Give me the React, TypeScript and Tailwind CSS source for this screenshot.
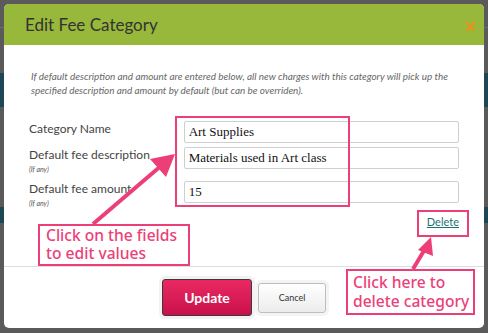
import React from 'react';

const PINK = '#ec3f78';

// Pink annotation text, same family as the tutorial callouts
const calloutFont = { fontFamily: '"Noto Sans", "Open Sans", sans-serif' };

const Field = ({ label, hint, value }: { label: string; hint?: boolean; value: string }) => (
  <div className={`flex ${hint ? 'h-[34px]' : 'h-[26px]'}`}>
    <div className="w-[155px] pt-[1px]">
      <div className="text-[12px] leading-[14px] text-[#444]">{label}</div>
      {hint && <div className="mt-[3px] text-[7px] italic leading-[9px] text-[#555]">(If any)</div>}
    </div>
    <input
      readOnly
      value={value}
      className="h-[22px] w-[276px] rounded-[2px] border border-[#cfcfcf] bg-white px-[4px] text-[13px] text-[#111] outline-none"
      style={{ fontFamily: '"Liberation Serif", serif' }}
    />
  </div>
);

export default function App() {
  return (
    <div className="relative h-[333px] w-[488px] overflow-hidden bg-[#5a5a5a]" style={{ fontFamily: 'Lato, "Open Sans", sans-serif' }}>
      {/* page behind the overlay */}
      <div className="flex h-full flex-col">
        <div className="h-[28px] border-b border-[#6a6a6a]" />
        <div className="h-[45px]" />
        <div className="h-[34px] bg-[#1d4755]" />
        <div className="h-[100px]" />
        <div className="h-[16px] bg-[#1d4755]" />
        <div className="flex-1" />
      </div>

      {/* modal */}
      <div className="absolute left-[4px] top-[4px] flex h-[324px] w-[480px] flex-col overflow-hidden rounded-[5px] bg-white">
        <div className="flex h-[41px] shrink-0 items-center justify-between bg-[#97b83a] pl-[21px] pr-[9px]">
          <h2 className="text-[17px] leading-none text-[#333]">Edit Fee Category</h2>
          <svg width="9" height="9" viewBox="0 0 9 9" className="mt-[4px]">
            <path d="M1 1 L8 8 M8 1 L1 8" stroke="#e8921c" strokeWidth="2.4" strokeLinecap="round" />
          </svg>
        </div>

        <div className="relative flex-1 px-[25px] pt-[24px]">
          <p className="pl-[2px] text-[9.9px] italic leading-[14px] text-[#666]">
            If default description and amount are entered below, all new charges with this category will pick up the
            specified description and amount by default (but can be overriden).
          </p>

          <div className="mt-[24px] flex flex-col">
            <Field label="Category Name" value="Art Supplies" />
            <Field label="Default fee description" hint value="Materials used in Art class" />
            <Field label="Default fee amount" hint value="15" />
          </div>

          <div className="mt-0 flex justify-end">
            <a href="#" className="text-[11px] leading-[14px] text-[#1f6f73] underline">Delete</a>
          </div>
        </div>

        <div className="flex h-[62px] shrink-0 items-center justify-center gap-[6px] border-t border-[#dedede]">
          <button className="h-[37px] w-[90px] rounded-[3px] border border-[#3a3a3a] bg-gradient-to-b from-[#ea2862] to-[#c9104b] text-[14px] font-bold text-white shadow-[0_0_0_3px_#f2f2f2]">
            Update
          </button>
          <button className="h-[30px] w-[68px] rounded-[3px] border border-[#bdbdbd] bg-gradient-to-b from-white to-[#ececec] text-[9px] text-[#333] shadow-[0_0_0_3px_#f4f4f4]">
            Cancel
          </button>
        </div>
      </div>

      {/* tutorial annotations */}
      <div className="absolute left-[175px] top-[116px] h-[91px] w-[175px] border-2" style={{ borderColor: PINK }} />
      <div className="absolute left-[417px] top-[210px] h-[27px] w-[52px] border-2" style={{ borderColor: PINK }} />

      <svg className="absolute left-0 top-0" width="488" height="333">
        <line x1="93" y1="224" x2="162" y2="165" stroke={PINK} strokeWidth="4" />
        <polygon points="175,154 150,159 166,177" fill={PINK} />
        <line x1="413" y1="269" x2="425" y2="249" stroke={PINK} strokeWidth="4" />
        <polygon points="431,237 418,250 433,256" fill={PINK} />
      </svg>

      <div
        className="absolute left-[38px] top-[224px] h-[42px] w-[152px] border-2 bg-white pl-[6px] text-[15.6px] font-medium leading-[18px]"
        style={{ ...calloutFont, borderColor: PINK, color: PINK }}
      >
        Click on the fields
        <br />
        to edit values
      </div>
      <div
        className="absolute left-[346px] top-[269px] h-[46px] w-[129px] border-2 bg-white pl-[5px] pt-[2px] text-[15.6px] font-medium leading-[19px]"
        style={{ ...calloutFont, borderColor: PINK, color: PINK }}
      >
        Click here to
        <br />
        delete category
      </div>
    </div>
  );
}
